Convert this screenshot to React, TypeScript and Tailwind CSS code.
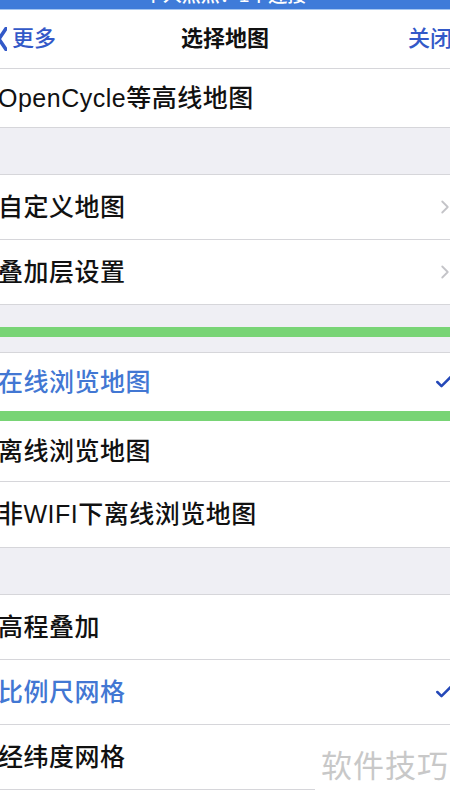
import { Check, ChevronRight } from "lucide-react";

const FONT = "font-['Liberation_Sans','Noto_Sans_CJK_SC',sans-serif]";

function Row({
  label,
  blue,
  chevron,
  check,
  h = "h-[65px]",
  noBorder,
}: {
  label: string;
  blue?: boolean;
  chevron?: boolean;
  check?: boolean;
  h?: string;
  noBorder?: boolean;
}) {
  return (
    <div
      className={`relative flex items-center bg-white ${h} ${
        noBorder ? "" : "border-b border-[#d6d6da]"
      }`}
    >
      <span
        className={`-ml-[2px] text-[25px] font-medium leading-none tracking-[0.5px] ${
          blue ? "text-[#4277d3]" : "text-[#111]"
        }`}
      >
        {label}
      </span>
      {chevron && (
        <ChevronRight
          className="absolute -right-[6px] top-1/2 -translate-y-1/2 text-[#c4c4c8]"
          size={22}
          strokeWidth={2}
        />
      )}
      {check && (
        <Check
          className="absolute -right-[4px] top-1/2 -translate-y-1/2 text-[#2448b8]"
          size={20}
          strokeWidth={3}
        />
      )}
    </div>
  );
}

function Gap({ h }: { h: string }) {
  return <div className={`${h} bg-[#efeff4] border-b border-[#d6d6da]`} />;
}

export default function App() {
  return (
    <div className={`relative w-[450px] h-[801px] overflow-hidden bg-white ${FONT}`}>
      {/* status bar, mostly cut off */}
      <div className="h-[10px] overflow-hidden bg-[#3f7bd9] border-b border-[#a6c6f0] flex justify-center">
        <span className="-mt-[14px] text-[19px] font-medium text-white leading-none">
          个人热点：1个连接
        </span>
      </div>

      {/* nav bar */}
      <div className="relative flex items-center justify-center h-[59px] border-b border-[#d6d6da] bg-white">
        <div className="absolute left-0 flex items-center text-[#3359c8]">
          <svg width="10" height="24" viewBox="0 0 10 24" className="-ml-[3px]">
            <path d="M9 1.5 L2 12 L9 22.5" fill="none" stroke="currentColor" strokeWidth="3.5" strokeLinecap="round" strokeLinejoin="round" />
          </svg>
          <span className="ml-[5px] text-[22px] font-medium leading-none">更多</span>
        </div>
        <span className="text-[22px] font-bold text-[#111] leading-none">选择地图</span>
        <span className="absolute left-[408px] text-[22px] font-medium text-[#3359c8] leading-none whitespace-nowrap">
          关闭
        </span>
      </div>

      <Row label="OpenCycle等高线地图" h="h-[59px]" />
      <Gap h="h-[47px]" />
      <Row label="自定义地图" chevron />
      <Row label="叠加层设置" chevron />

      <div className="h-[22px] bg-[#efeff4]" />
      <div className="h-[10px] bg-[#78d475]" />
      <div className="h-[16px] bg-[#efeff4] border-b border-[#d6d6da]" />

      <Row label="在线浏览地图" blue check h="h-[58px]" noBorder />
      <div className="h-[10px] bg-[#78d475]" />
      <Row label="离线浏览地图" h="h-[61px]" />
      <Row label="非WIFI下离线浏览地图" h="h-[66px]" />
      <Gap h="h-[47px]" />
      <Row label="高程叠加" />
      <Row label="比例尺网格" blue check />
      <Row label="经纬度网格" />
      <div className="h-[20px] bg-white" />

      {/* watermark */}
      <div className="absolute right-0 top-[744px] w-[135px] h-[57px] bg-white flex items-start pt-[3px] pl-[6px]">
        <span className="text-[31px] text-[#c8c8c8] tracking-[1px] leading-none mt-[4px]">软件技巧</span>
      </div>
    </div>
  );
}
